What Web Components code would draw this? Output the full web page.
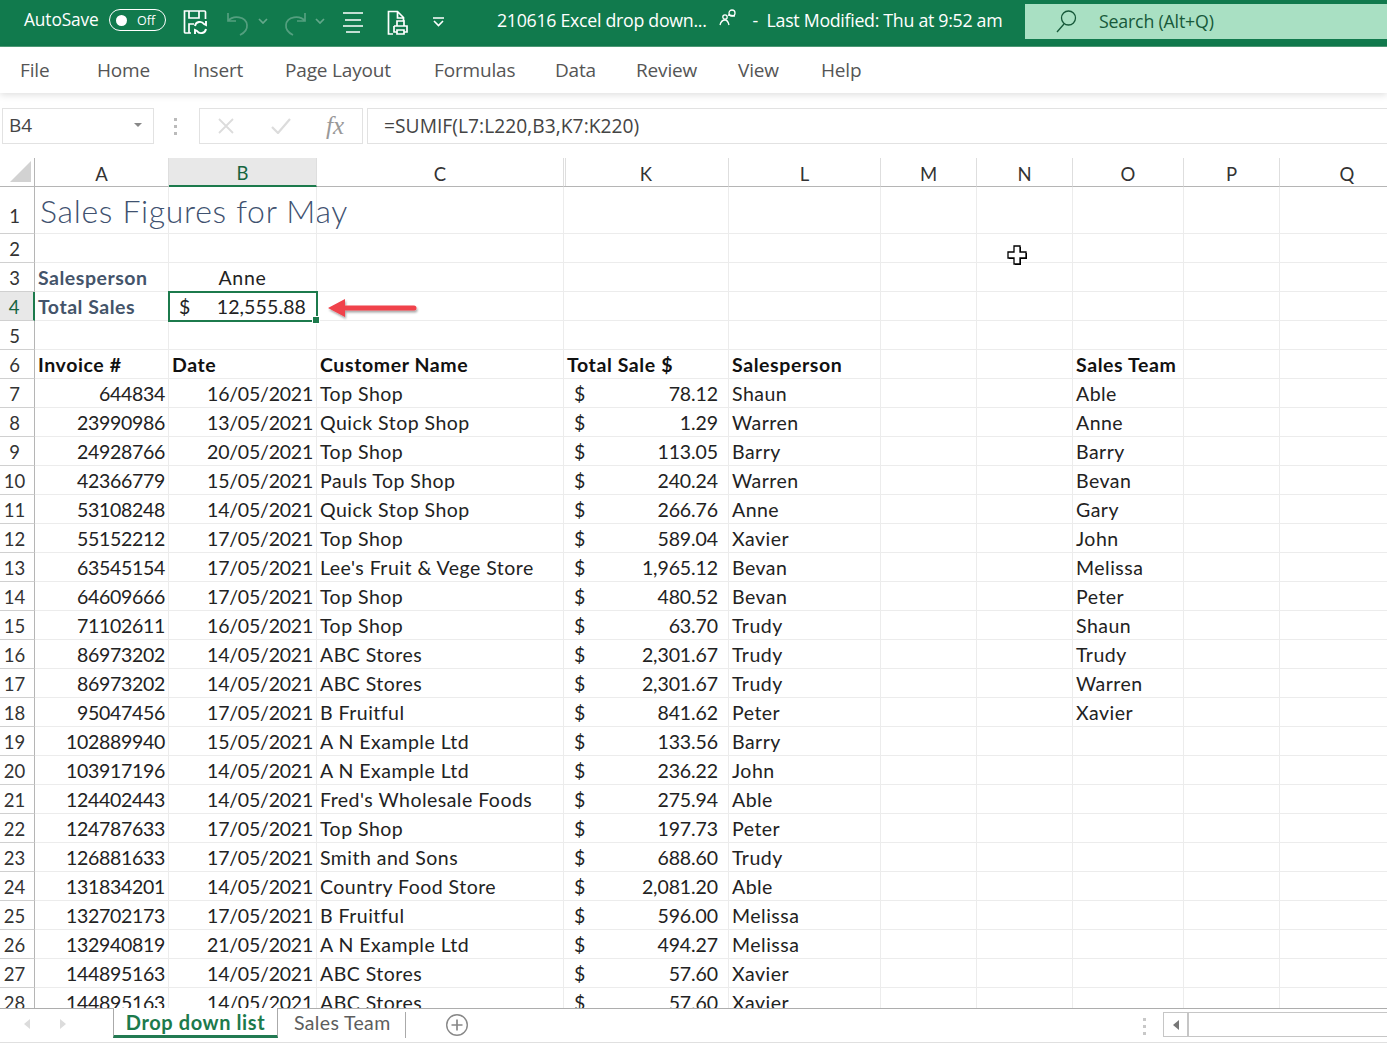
<!DOCTYPE html>
<html><head><meta charset="utf-8"><style>
html,body{margin:0;padding:0;background:#fff;overflow:hidden}
body{width:1387px;height:1047px;display:flex;flex-direction:column;font-family:"Open Sans","Liberation Sans",sans-serif}
</style></head><body>
<x-titlebar></x-titlebar>
<x-ribbon-tabs></x-ribbon-tabs>
<x-formula-bar></x-formula-bar>
<x-sheet></x-sheet>
<x-sheet-tabs></x-sheet-tabs>
<script>
class XTitlebar extends HTMLElement{constructor(){super();this.attachShadow({mode:'open'}).innerHTML=`<style>
:host{display:flex;align-items:center;height:47px;box-sizing:border-box;background:#117a4d;border-bottom:1px solid #4f9d78;color:#fff;font-family:"Open Sans",sans-serif;position:relative;flex:none}
svg{display:block;flex:none;fill:none;stroke:#fff;stroke-width:1.7}
.as{margin-left:24px;margin-top:-7px;font-size:17.300px;width:85px;white-space:nowrap;letter-spacing:-.1px}
.tog{width:57px;height:22px;box-sizing:border-box;border:1.500px solid #fff;border-radius:12px;display:flex;align-items:center;font-size:12.500px;margin-right:17px;margin-top:-6px;flex:none}
.tog i{width:11px;height:11px;border-radius:50%;background:#fff;margin:0 10px 0 6px}
.title{font-size:17.800px;white-space:nowrap;letter-spacing:-.3px;margin-top:-7px}
.search{margin-left:auto;width:362px;height:35px;align-self:flex-start;margin-top:4px;background:#a9e0c3;display:flex;align-items:center;color:#17593a;font-size:17.800px;letter-spacing:-.2px;flex:none;padding-bottom:1px;box-sizing:border-box}
.search svg{stroke:#17593a;stroke-width:1.300;margin:0 21px 0 29px}
</style>
<span class="as">AutoSave</span><span class="tog"><i></i>Off</span>
<svg width="26" height="26" viewBox="0 0 26 26" style="margin:-2px 17px 0 0"><path d="M8 24H2.500a1 1 0 0 1-1-1V2h20a1 1 0 0 1 1 1v7M6 2v7h10V2M6 24v-9h5"/><path d="M12 17a5 5 0 0 1 9-2l2 1v-4M23 20a5 5 0 0 1-9 2l-2-1v4" stroke-width="1.900"/></svg>
<svg width="24" height="26" viewBox="0 0 24 26" style="opacity:.28;margin-right:8px"><path d="M2 3v8h8M2 11c5-6 18-5 19 4 .5 5-3 8-7 10"/></svg>
<svg width="10" height="6" viewBox="0 0 10 6" style="opacity:.35;margin:-4px 15px 0 0"><path d="M1 1l4 4 4-4"/></svg>
<svg width="24" height="26" viewBox="0 0 24 26" style="opacity:.28;margin-right:8px"><path d="M22 3v8h-8M22 11c-5-6-18-5-19 4-.5 5 3 8 7 10"/></svg>
<svg width="10" height="6" viewBox="0 0 10 6" style="opacity:.35;margin:-4px 17px 0 0"><path d="M1 1l4 4 4-4"/></svg>
<svg width="22" height="22" viewBox="0 0 22 22" style="margin:-2px 23px 0 0"><path d="M1 2h20M3 9h16M1 15h20M4 21h14" stroke-width="1.600"/></svg>
<svg width="22" height="26" viewBox="0 0 22 26" style="margin-right:23px"><path d="M6 24H1.500V1.500h9l6 6V11M10.500 2v6h6"/><path d="M10 16v-5h7v5M7 16h13v6h-3M10 22H7v-6M10 20h7v4h-7z"/></svg>
<svg width="13" height="10" viewBox="0 0 13 10" style="margin:-3px 52px 0 0"><path d="M1 1h11M2 4l4.500 4.500L11 4" stroke-width="1.600"/></svg>
<span class="title">210616 Excel drop down...</span>
<svg width="20" height="20" viewBox="0 0 20 20" style="stroke-width:1.300;margin:-11px 14px 0 12px"><circle cx="13" cy="5" r="3"/><circle cx="6" cy="9" r="2.200"/><path d="M1 17c1-4 3-5 5-5s3 1 4 5M9 7l7 1"/></svg>
<span class="title">-&nbsp; Last Modified: Thu at 9:52 am</span>
<div class="search"><svg width="24" height="24" viewBox="0 0 24 24"><circle cx="14.500" cy="9" r="7"/><path d="M10 15L3 23"/></svg>Search (Alt+Q)</div>`}}
customElements.define('x-titlebar',XTitlebar);

class XRibbonTabs extends HTMLElement{constructor(){super();
const t=[['File',20],['Home',97],['Insert',193],['Page Layout',285],['Formulas',434],['Data',555],['Review',636],['View',738],['Help',821]];
let prev=0,h='';const w=[30,53,48,106,80,41,60,41,40];
t.forEach((x,i)=>{h+=`<span style="margin-left:${x[1]-prev}px;width:${w[i]}px">${x[0]}</span>`;prev=x[1]+w[i]});
this.attachShadow({mode:'open'}).innerHTML=`<style>
:host{display:flex;align-items:center;height:46px;box-sizing:border-box;background:#fff;box-shadow:0 2px 7px rgba(0,0,0,.13);color:#555;font-size:19px;font-family:"Open Sans",sans-serif;letter-spacing:-.17px;flex:none;position:relative;z-index:1;padding-bottom:1px}
span{display:block;white-space:nowrap;flex:none}
</style>${h}`}}
customElements.define('x-ribbon-tabs',XRibbonTabs);

class XFormulaBar extends HTMLElement{constructor(){super();this.attachShadow({mode:'open'}).innerHTML=`<style>
:host{display:flex;align-items:center;box-sizing:content-box;height:36px;padding:15px 0 14px 2px;color:#444;flex:none;background:#fff}
.b{height:36px;box-sizing:border-box;border:1px solid #e2e2e2;display:flex;align-items:center;flex:none}
.name{width:152px;padding:0 11px 2px 6px;font-size:19px;justify-content:space-between}
.name i{border:4px solid transparent;border-top:4.500px solid #888;border-bottom:0}
.dots{width:45px;padding-right:2px;box-sizing:border-box;display:flex;flex-direction:column;align-items:center;gap:4px;flex:none}
.dots i{width:3px;height:3px;background:#bbb}
.fx{width:164px;position:relative;justify-content:flex-start}
.fx svg{fill:none;stroke:#dcdcdc;stroke-width:1.800;flex:none}
.fx span{font:italic 25px "Liberation Serif",serif;color:#999;margin-left:35px}
.f{flex:1;margin-left:4px;padding:0 0 2px 16px;font-size:19.200px;letter-spacing:.05px;border-right:0;white-space:nowrap}
</style>
<div class="b name">B4<i></i></div><div class="dots"><i></i><i></i><i></i></div>
<div class="b fx"><svg width="16" height="16" viewBox="0 0 16 16" style="margin-left:18px"><path d="M1 1l14 14M15 1L1 15"/></svg><svg width="20" height="16" viewBox="0 0 20 16" style="margin-left:37px"><path d="M1 9l6 6L19 1" stroke-width="2.200"/></svg><span>fx</span></div>
<div class="b f">=SUMIF(L7:L220,B3,K7:K220)</div>`}}
customElements.define('x-formula-bar',XFormulaBar);

const DATA=`644834|16/05/2021|Top Shop|78.12|Shaun|Able
23990986|13/05/2021|Quick Stop Shop|1.29|Warren|Anne
24928766|20/05/2021|Top Shop|113.05|Barry|Barry
42366779|15/05/2021|Pauls Top Shop|240.24|Warren|Bevan
53108248|14/05/2021|Quick Stop Shop|266.76|Anne|Gary
55152212|17/05/2021|Top Shop|589.04|Xavier|John
63545154|17/05/2021|Lee's Fruit &amp; Vege Store|1,965.12|Bevan|Melissa
64609666|17/05/2021|Top Shop|480.52|Bevan|Peter
71102611|16/05/2021|Top Shop|63.70|Trudy|Shaun
86973202|14/05/2021|ABC Stores|2,301.67|Trudy|Trudy
86973202|14/05/2021|ABC Stores|2,301.67|Trudy|Warren
95047456|17/05/2021|B Fruitful|841.62|Peter|Xavier
102889940|15/05/2021|A N Example Ltd|133.56|Barry|
103917196|14/05/2021|A N Example Ltd|236.22|John|
124402443|14/05/2021|Fred's Wholesale Foods|275.94|Able|
124787633|17/05/2021|Top Shop|197.73|Peter|
126881633|17/05/2021|Smith and Sons|688.60|Trudy|
131834201|14/05/2021|Country Food Store|2,081.20|Able|
132702173|17/05/2021|B Fruitful|596.00|Melissa|
132940819|21/05/2021|A N Example Ltd|494.27|Melissa|
144895163|14/05/2021|ABC Stores|57.60|Xavier|
144895163|14/05/2021|ABC Stores|57.60|Xavier|`.split('\n').map(l=>l.split('|'));

class XSheet extends HTMLElement{constructor(){super();
const cols=['A','B','C','K','L','M','N','O','P','Q'];
const c=(txt='',cls='')=>`<div class="c ${cls}">${txt}</div>`;
const acct=(v)=>`<div class="c acct"><span>$</span><span>${v}</span></div>`;
const row=(n,cells,hcls='')=>{let h=`<div class="rh ${hcls}">${n}</div>`;for(let i=0;i<10;i++)h+=cells[i]||c();return h};
let h=`<div class="corner"><svg width="22" height="22" viewBox="0 0 22 22"><path d="M21 0V21H0z" fill="#d2d2d2"/></svg></div>`;
cols.forEach(x=>h+=`<div class="ch ${x=='B'?'sel':''} ${x=='K'?'k':''}">${x}</div>`);
h+=row(1,[`<div class="c title">Sales Figures for May</div>`],'one');
h+=row(2,[]);
h+=row(3,[c('Salesperson','lbl'),c('Anne','ctr')]);
h+=row(4,[c('Total Sales','lbl'),`<div class="c acct cur"><span>$</span><span>12,555.88</span><i></i></div>`],'sel');
h+=row(5,[]);
h+=row(6,[c('Invoice #','bold'),c('Date','bold'),c('Customer Name','bold'),c('Total Sale $','bold'),c('Salesperson','bold'),,,c('Sales Team','bold')]);
DATA.forEach((d,i)=>{h+=row(i+7,[c(d[0],'r'),c(d[1],'r dt'),c(d[2]),acct(d[3]),c(d[4]),,,c(d[5])])});
this.attachShadow({mode:'open'}).innerHTML=`<style>
:host{display:block;flex:none;height:850px;overflow:hidden;position:relative;background:#fff;font-family:Lato,"Liberation Sans",sans-serif;font-size:19.500px;color:#222}
.g{display:grid;grid-template-columns:35px 134px 148px 247px 165px 152px 96px 96px 111px 96px 135px;grid-template-rows:29px 47px repeat(27,29px);width:1415px}
.corner,.ch,.rh,.c{box-sizing:border-box;display:flex;align-items:flex-end;white-space:nowrap;min-width:0}
.corner{border-right:1px solid #b5b5b5;border-bottom:1px solid #b5b5b5;padding:4px 0 3px 10px}
.ch{justify-content:center;border-right:1px solid #dedede;border-bottom:1px solid #b5b5b5;font-size:18.500px;line-height:24px;color:#333}
.ch.k{box-shadow:inset 1px 0 #fff,inset 2px 0 #dedede}
.ch.sel{background:#e8e8e8;color:#16653f;border-bottom:2px solid #1c7a4c}
.rh{justify-content:center;border-right:1px solid #b5b5b5;border-bottom:1px solid #d0d0d0;padding:0 5px 0 0;font-size:18.500px;line-height:25px;color:#333}
.rh.one{padding-bottom:4px}
.rh.sel{background:#e8e8e8;color:#16653f;border-right:2px solid #1c7a4c}
.c{border-right:1px solid #ececec;border-bottom:1px solid #ececec;padding:0 3px 1px;line-height:25px;letter-spacing:.48px;position:relative}
.title{font-weight:300;font-size:32px;color:#3f5270;line-height:44px;padding-left:5px;letter-spacing:.67px;padding-bottom:0}
.lbl{font-weight:700;color:#44546a;letter-spacing:.52px}
.bold{font-weight:700;color:#111;letter-spacing:.6px}
.r{justify-content:flex-end;padding-right:3px;letter-spacing:-.3px}
.dt{letter-spacing:-.22px}
.ctr{justify-content:center;letter-spacing:.7px}
.acct{justify-content:space-between;padding:0 10px 1px;letter-spacing:-.1px}
.cur{outline:2px solid #1c7a4c;outline-offset:-1px;z-index:2;overflow:visible;letter-spacing:.12px}
.cur i{position:absolute;right:-4px;bottom:-4px;width:6px;height:6px;background:#1c7a4c;border:1px solid #fff}
.arrow{position:absolute;left:327px;top:138px;z-index:3}
.cursor{position:absolute;left:1006px;top:85px;z-index:3}
</style><div class="g">${h}</div>
<svg class="arrow" width="94" height="26" viewBox="0 0 94 26"><defs><filter id="s" x="-10%" y="-30%" width="120%" height="170%"><feDropShadow dx="1" dy="2" stdDeviation="1.300" flood-color="#000" flood-opacity=".35"/></filter></defs><path d="M1 12L18 3V9.500H87a2.500 2.500 0 0 1 0 5H18V21z" fill="#f0424b" filter="url(#s)"/></svg>
<svg class="cursor" width="24" height="24" viewBox="0 0 24 24"><path d="M8 3h6v6h6v6h-6v6H8v-6H2V9h6z" fill="#000" transform="translate(1 1)"/><path d="M8 3h6v6h6v6h-6v6H8v-6H2V9h6z" fill="#fff" stroke="#000" stroke-width="1.300"/></svg>`;
}}
customElements.define('x-sheet',XSheet);

class XSheetTabs extends HTMLElement{constructor(){super();this.attachShadow({mode:'open'}).innerHTML=`<style>
:host{display:flex;align-items:flex-start;height:35px;box-sizing:border-box;border-top:1.500px solid #adadad;border-bottom:1px solid #e0e0e0;background:#fff;flex:none;font-family:Lato,sans-serif;font-size:19.500px;position:relative;z-index:4}
.nav{width:113px;height:29px;display:flex;align-items:center;flex:none;gap:30px;padding-left:24px;box-sizing:border-box}
.nav i{border:5px solid transparent;border-left:0;border-right:6px solid #dcdcdc;width:0}
.nav i+i{border-left:6px solid #dcdcdc;border-right:0}
.tab{width:165px;height:30px;box-sizing:border-box;border-left:1px solid #aaa;border-right:1px solid #aaa;border-bottom:3px solid #227a52;padding-top:2px;margin-top:-1.500px;background:#fff;font-weight:700;color:#1c7a4c;display:flex;align-items:center;justify-content:center;font-size:20px;flex:none;letter-spacing:.6px}
.t2{width:128px;height:26px;margin-top:3px;padding-bottom:6px;box-sizing:border-box;border-right:1px solid #aaa;color:#5d5d5d;display:flex;align-items:center;padding-left:16px;flex:none;letter-spacing:.35px}
.plus{margin:4px 0 0 39px;flex:none}
.dots{margin-left:674px;margin-top:9px;display:flex;flex-direction:column;gap:4px;flex:none}
.dots i{width:3px;height:3px;background:#c8c8c8}
.sb{margin-left:17px;margin-top:3px;width:224px;height:25px;box-sizing:border-box;border:1.500px solid #c6c6c6;border-right:0;display:flex;flex:none}
.sb span{width:25px;box-sizing:border-box;border-right:2px solid #c6c6c6;display:flex;align-items:center;justify-content:center}
.sb i{border:5.500px solid transparent;border-left:0;border-right:6px solid #777}
</style><div class="nav"><i></i><i></i></div><div class="tab">Drop down list</div><div class="t2">Sales Team</div>
<svg class="plus" width="24" height="24" viewBox="0 0 24 24" fill="none" stroke="#888" stroke-width="1.400"><circle cx="12" cy="12" r="10.300"/><path d="M12 6.500v11M6.500 12h11" stroke-width="1.700"/></svg>
<div class="dots"><i></i><i></i><i></i></div><div class="sb"><span><i></i></span></div>`}}
customElements.define('x-sheet-tabs',XSheetTabs);
</script></body></html>
